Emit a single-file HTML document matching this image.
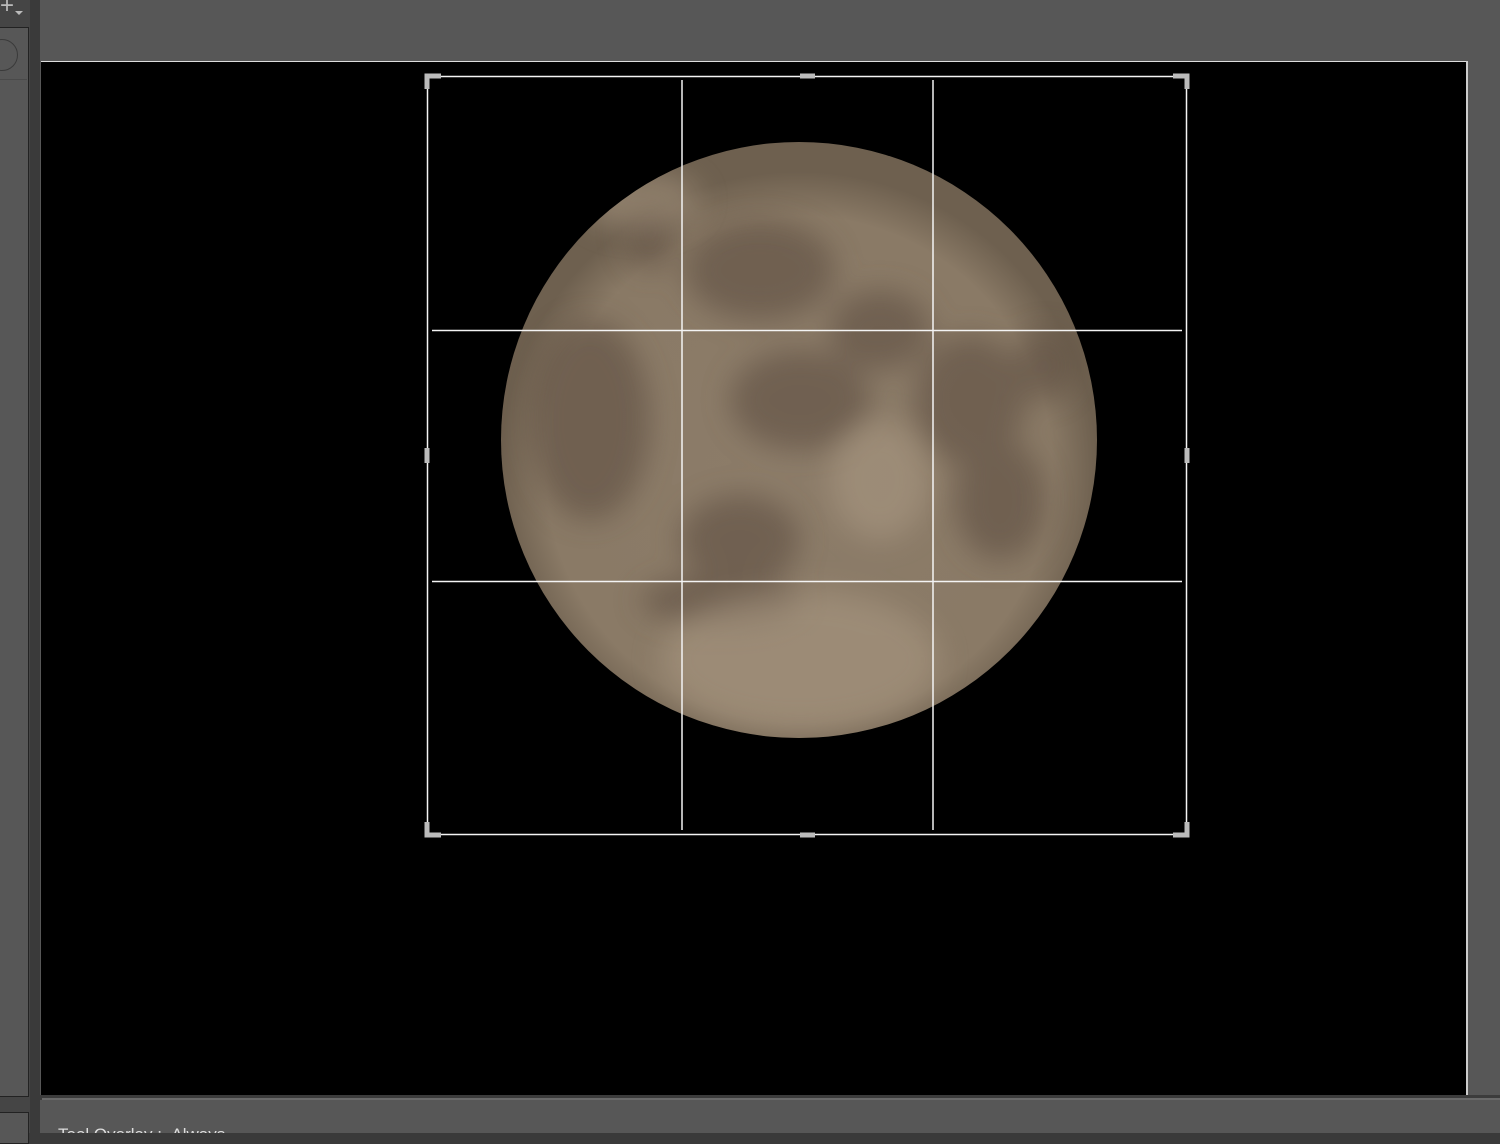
<!DOCTYPE html>
<html><head><meta charset="utf-8"><style>
html,body{margin:0;padding:0;width:1500px;height:1133px;overflow:hidden;background:#3a3a3a;font-family:"Liberation Sans",sans-serif}
.abs{position:absolute}
</style></head><body>
<div class="abs" style="left:0;top:0;width:30px;height:1133px;background:#454545"></div>
<div class="abs" style="left:-2px;top:27px;width:29px;height:1068px;background:#575757;border:1px solid #222"></div>
<div class="abs" style="left:-14px;top:39px;width:30px;height:30px;border-radius:50%;border:1px solid #3a3a3a"></div>
<div class="abs" style="left:0;top:79px;width:27px;height:1px;background:#4a4a4a"></div>
<div class="abs" style="left:-2px;top:1112px;width:29px;height:30px;background:#575757;border:1px solid #222"></div>
<div class="abs" style="left:0;top:-8px;color:#bbb;font-size:24px">+</div>
<div class="abs" style="left:15px;top:11px;width:0;height:0;border-left:4px solid transparent;border-right:4px solid transparent;border-top:4px solid #bbb"></div>
<div class="abs" style="left:40px;top:0;width:1460px;height:1133px;background:#575757;overflow:hidden">
<div class="abs" style="left:18px;top:1125px;color:#ddd;font-size:17px;white-space:nowrap">Tool Overlay : &nbsp;Always</div>
</div>
<div class="abs" style="left:41px;top:61px;width:1426px;height:1px;background:#ddd"></div>
<div class="abs" style="left:1466px;top:61px;width:2px;height:1034px;background:#ccc"></div>
<div class="abs" style="left:40px;top:1095px;width:1460px;height:5px;background:#3c3c3c"></div>
<div class="abs" style="left:42px;top:1098px;width:1458px;height:2px;background:#6a6a6a"></div>
<svg class="abs" style="left:41px;top:62px" width="1425" height="1033" viewBox="41 62 1425 1033">
<defs>
<radialGradient id="mg" cx="0.5" cy="0.55" r="0.5">
<stop offset="0" stop-color="#8c7c69"/><stop offset="0.85" stop-color="#8a7a66"/><stop offset="1" stop-color="#6e604f"/></radialGradient>
<filter id="bl"><feGaussianBlur stdDeviation="14"/></filter>
<clipPath id="mc"><circle cx="799" cy="440" r="298"/></clipPath>
</defs>
<rect x="41" y="62" width="1425" height="1033" fill="#000"/>
<circle cx="799" cy="440" r="298" fill="url(#mg)"/>
<g clip-path="url(#mc)" filter="url(#bl)" fill="#5e5043" opacity="0.6">
<ellipse cx="760" cy="270" rx="75" ry="50"/>
<ellipse cx="880" cy="330" rx="50" ry="40"/>
<ellipse cx="590" cy="420" rx="60" ry="100"/>
<ellipse cx="800" cy="400" rx="70" ry="50"/>
<ellipse cx="970" cy="400" rx="55" ry="65"/>
<ellipse cx="1045" cy="365" rx="30" ry="35"/>
<ellipse cx="1000" cy="500" rx="45" ry="60"/>
<ellipse cx="740" cy="540" rx="60" ry="45"/>
<ellipse cx="720" cy="600" rx="80" ry="25"/>
<ellipse cx="650" cy="230" rx="25" ry="40"/>
</g>
<g clip-path="url(#mc)" filter="url(#bl)" fill="#ad9c86" opacity="0.5">
<ellipse cx="800" cy="660" rx="140" ry="70"/>
<ellipse cx="880" cy="480" rx="50" ry="60"/>
<ellipse cx="640" cy="200" rx="60" ry="30"/>
</g>
<g stroke="#f4f4f4" stroke-width="1.5" fill="none">
<rect x="427.5" y="76.5" width="759" height="758"/>
<line x1="682" y1="80" x2="682" y2="830"/>
<line x1="933" y1="80" x2="933" y2="830"/>
<line x1="432" y1="330.5" x2="1182" y2="330.5"/>
<line x1="432" y1="581.5" x2="1182" y2="581.5"/>
</g>
<g stroke="#bbb" stroke-width="5" fill="none">
<path d="M427 89V76H441"/>
<path d="M1173 76H1187V89"/>
<path d="M427 822V835H441"/>
<path d="M1173 835H1187V822"/>
<path d="M800 76H815"/><path d="M800 835H815"/>
<path d="M427 448V463"/><path d="M1187 448V463"/>
</g>
</svg>
</body></html>
